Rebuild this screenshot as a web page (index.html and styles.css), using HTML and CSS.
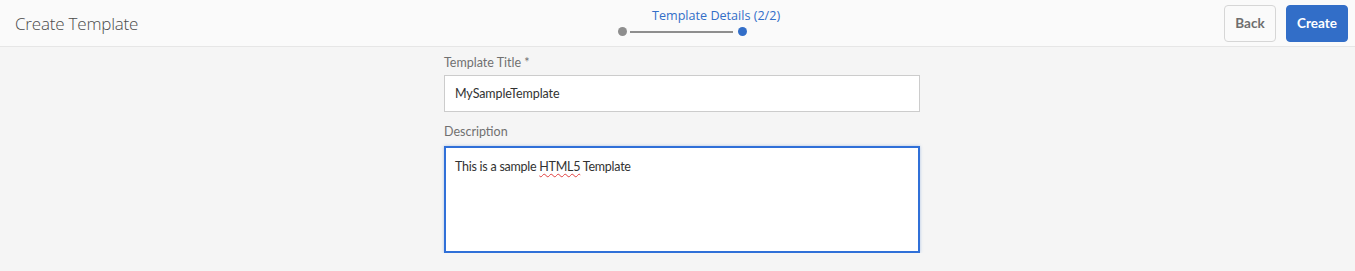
FILE: index.html
```html
<!DOCTYPE html>
<html lang="en">
<head>
    <meta charset="UTF-8">
    <title>Create Template</title>
    <link rel="stylesheet" href="styles.css">
</head>
<body>
    <header class="topbar">
        <div class="page-title">Create Template</div>
        <div class="wizard">
            <div class="wizard-label">Template Details (2/2)</div>
            <div class="wizard-steps">
                <span class="dot"></span>
                <span class="track"></span>
                <span class="dot active"></span>
            </div>
        </div>
        <div class="actions">
            <button class="btn btn-back">Back</button>
            <button class="btn btn-create">Create</button>
        </div>
    </header>

    <main class="form">
        <label class="field-label">Template Title *</label>
        <div class="text-input">MySampleTemplate</div>

        <label class="field-label">Description</label>
        <div class="text-area">This is a sample <span class="misspelled">HTML5</span> Template</div>
    </main>
</body>
</html>
```

FILE: styles.css
```css
body {
    margin: 0;
    background: #f5f5f5;
    font-family: Lato, "Open Sans", Arial, sans-serif;
    color: #323232;
}
.topbar {
    height: 46px;
    background: #fafafa;
    border-bottom: 1px solid #e6e6e6;
    display: grid;
    grid-template-columns: 1fr auto 1fr;
    align-items: center;
    padding: 0 7px 0 15px;
}
.page-title {
    font-family: "Open Sans", Arial, sans-serif;
    font-size: 17px;
    font-weight: 300;
    color: #4b4b4b;
    letter-spacing: -0.2px;
}
.wizard {
    width: 150px;
    margin-left: 23px;
    display: flex;
    flex-direction: column;
    align-items: flex-start;
    margin-top: -3px;
}
.wizard-label {
    font-family: "Open Sans", Arial, sans-serif;
    font-size: 12.6px;
    color: #326ec8;
    margin-left: 34px;
    white-space: nowrap;
}
.wizard-steps {
    display: flex;
    align-items: center;
    margin-top: 3px;
}
.dot {
    width: 9px;
    height: 9px;
    border-radius: 50%;
    background: #8e8e8e;
}
.dot.active {
    background: #326ec8;
}
.track {
    width: 103px;
    height: 2px;
    background: #8e8e8e;
    margin: 0 5px 0 3px;
}
.actions {
    display: flex;
    justify-content: flex-end;
    gap: 10px;
}
.btn {
    height: 37px;
    padding: 0;
    border-radius: 4px;
    font-family: Lato, "Open Sans", Arial, sans-serif;
    font-size: 13.5px;
    font-weight: bold;
    cursor: pointer;
}
.btn-back {
    width: 52px;
    background: #fafafa;
    border: 1px solid #d6d6d6;
    color: #6e6e6e;
}
.btn-create {
    width: 62px;
    background: #326ec8;
    border: 1px solid #326ec8;
    color: #ffffff;
}
.form {
    width: 476px;
    margin: 0 0 0 444px;
    padding-top: 8px;
    display: flex;
    flex-direction: column;
}
.field-label {
    font-size: 12.5px;
    line-height: 16px;
    color: #707070;
    margin-bottom: 4px;
}
.text-input {
    box-sizing: border-box;
    height: 37px;
    border: 1px solid #cccccc;
    background: #ffffff;
    padding: 0 10px;
    font-size: 12.5px;
    letter-spacing: -0.1px;
    line-height: 35px;
    margin-bottom: 12px;
}
.text-area {
    box-sizing: border-box;
    height: 107px;
    margin-top: 2px;
    border: 2px solid #3070d8;
    box-shadow: 0 0 3px rgba(50, 110, 200, 0.35);
    background: #ffffff;
    padding: 11px 9px;
    font-size: 12.5px;
    letter-spacing: -0.25px;
}
.misspelled {
    text-decoration: underline wavy #e04040;
    text-decoration-thickness: 1px;
    text-underline-offset: 2px;
}
```
